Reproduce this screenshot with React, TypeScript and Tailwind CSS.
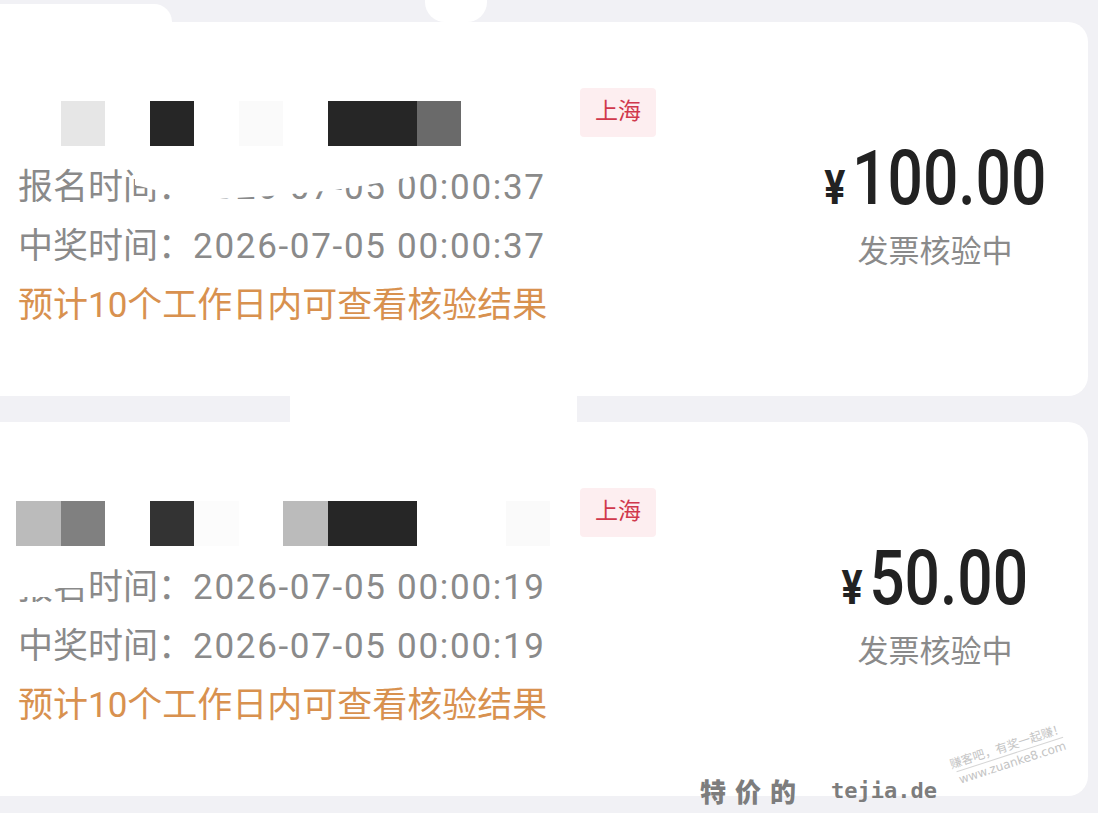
import React from 'react';

type Prize = {
  id: number;
  mosaic: string[];
  city: string;
  signupAt: string;
  wonAt: string;
  amount: string;
};

// name is shown as a pixel mosaic, one class per cell
const prizes: Prize[] = [
  {
    id: 1,
    mosaic: [
      'bg-white', 'bg-[#e6e6e6]', 'bg-white', 'bg-[#262626]', 'bg-white', 'bg-[#fafafa]',
      'bg-white', 'bg-[#262626]', 'bg-[#262626]', 'bg-[#6a6a6a]', 'bg-white', 'bg-white',
    ],
    city: '上海',
    signupAt: '2026-07-05 00:00:37',
    wonAt: '2026-07-05 00:00:37',
    amount: '100.00',
  },
  {
    id: 2,
    mosaic: [
      'bg-[#bbbbbb]', 'bg-[#808080]', 'bg-white', 'bg-[#333333]', 'bg-[#fcfcfc]', 'bg-white',
      'bg-[#bbbbbb]', 'bg-[#262626]', 'bg-[#262626]', 'bg-white', 'bg-white', 'bg-[#fafafa]',
    ],
    city: '上海',
    signupAt: '2026-07-05 00:00:19',
    wonAt: '2026-07-05 00:00:19',
    amount: '50.00',
  },
];

const PrizeCard: React.FC<{ prize: Prize; children?: React.ReactNode }> = ({ prize, children }) => {
  return (
    <div className="relative flex h-[374px] w-[1088px] rounded-r-[20px] bg-white pl-[18px]">
      <div className="flex flex-1 flex-col pt-[66px]">
        <div className="flex items-start">
          <div className="-ml-[2px] mt-[13px] flex w-[564px]">
            {prize.mosaic.map((cls, i) => (
              <div key={i} className={`h-[45px] w-[44.5px] shrink-0 ${cls}`} />
            ))}
          </div>
          <span className="flex h-[49px] w-[76px] items-center justify-center rounded-[4px] bg-[#fdeef0] text-[23px] text-[#d0384c]">
            {prize.city}
          </span>
        </div>
        <div className="mt-[12px] text-[35px] leading-[59px] text-[#8a8a8a]">
          <div>
            报名时间：<span className="tracking-[1.7px]">{prize.signupAt}</span>
          </div>
          <div>
            中奖时间：<span className="tracking-[1.7px]">{prize.wonAt}</span>
          </div>
          <div className="text-[#d8914f]">预计10个工作日内可查看核验结果</div>
        </div>
      </div>

      <div className="mr-[23px] flex w-[260px] flex-col items-center justify-center pb-[6px]">
        <div className="flex h-[80px] scale-x-[0.82] items-baseline justify-center font-medium text-[#222222]">
          <span className="mr-[8px] text-[48px] font-bold">¥</span>
          <span className="text-[76px] leading-none">{prize.amount}</span>
        </div>
        <div className="mt-[12px] text-[31px] leading-[40px] text-[#8a8a8a]">发票核验中</div>
      </div>

      {children}
    </div>
  );
};

export default function App() {
  return (
    <div className="relative h-[813px] w-[1098px] overflow-hidden bg-[#f1f1f5] pt-[22px] font-[Roboto,'Noto_Sans_CJK_SC',sans-serif]">
      {/* retouch patches on the top band */}
      <div className="absolute left-0 top-[4px] h-[18px] w-[172px] rounded-tr-[30px] bg-white" />
      <div className="absolute left-[425px] top-0 h-[22px] w-[62px] rounded-b-[20px] bg-white" />

      <PrizeCard prize={prizes[0]}>
        <div className="absolute left-[135px] top-[138px] h-[42px] w-[300px] bg-white [clip-path:polygon(0px_0px,300px_0px,300px_12px,250px_22px,200px_30px,135px_36px,65px_40px,50px_40px,20px_30px,0px_25px)]" />
      </PrizeCard>

      {/* white patch across the gap */}
      <div className="relative h-[26px]">
        <div className="absolute -top-[2px] left-[290px] h-[32px] w-[287px] bg-white" />
      </div>

      <PrizeCard prize={prizes[1]}>
        <div className="absolute left-0 top-[140px] h-[35px] w-[86px] bg-white [clip-path:polygon(0px_0px,86px_0px,86px_26px,52px_26px,52px_35px,0px_35px)]" />
      </PrizeCard>

      {/* watermarks */}
      <div className="absolute left-[700px] top-[771px] flex items-center gap-[26px] text-[#7d7d7d]">
        <span className="font-['Noto_Sans_CJK_SC',sans-serif] text-[26px] font-black tracking-[9px]">特价的</span>
        <span className="font-['DejaVu_Sans_Mono',monospace] text-[22px] font-bold">tejia.de</span>
      </div>
      <div className="absolute left-[950px] top-[738px] -rotate-[18deg]">
        <p className="text-center font-['DejaVu_Sans','Noto_Sans_CJK_SC',sans-serif] text-[12px] leading-[17px] text-[#c4c4c4]">
          赚客吧，有奖一起赚！
          <br />
          www.zuanke8.com
        </p>
        <div className="absolute left-[4px] right-[4px] top-[16px] h-px bg-[#d6d6d6]" />
      </div>
    </div>
  );
}
